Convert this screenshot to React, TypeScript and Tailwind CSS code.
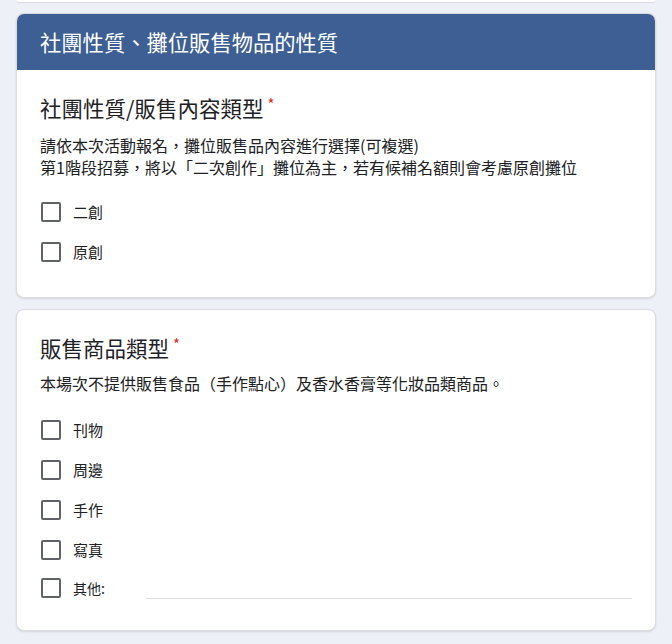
import React from "react";

const font = {
  fontFamily: '"Noto Sans CJK TC", Roboto, "Noto Sans", sans-serif',
};

function Box() {
  return (
    <span className="block w-[20px] h-[20px] shrink-0 rounded-[2px] border-2 border-[#5f6368] bg-white" />
  );
}

function Option({ label }: { label: string }) {
  return (
    <div className="flex items-center h-[40px]">
      <div className="ml-[1px]">
        <Box />
      </div>
      <span className="ml-[12px] text-[15px] leading-[20px] text-[#202124]">{label}</span>
    </div>
  );
}

function Title({ text }: { text: string }) {
  return (
    <div className="text-[21.5px] leading-[30px] text-[#202124]">
      {text}
      <span className="text-[#d93025] text-[15px] align-top relative top-[-4px] ml-[4px]">*</span>
    </div>
  );
}

export default function App() {
  return (
    <div className="min-h-[644px] w-[672px] bg-[#edf0f7] overflow-hidden" style={font}>
      <div className="mx-[16px] w-[640px] h-[3px] bg-white border-b border-[#dadce0] rounded-b-[8px]" />

      {/* Card 1 */}
      <div className="mx-[16px] mt-[10px] w-[640px] rounded-[8px] bg-white border border-[#dadce0] overflow-hidden shadow-[0_1px_2px_rgba(60,64,67,0.15)]">
        <div className="h-[56px] bg-[#3e5f94] flex items-center px-[23px]">
          <span className="text-white text-[21.3px] leading-[30px]">社團性質、攤位販售物品的性質</span>
        </div>
        <div className="px-[23px] pt-[23px] pb-[25px]">
          <Title text="社團性質/販售內容類型" />
          <div className="mt-[11px] text-[16px] leading-[22px] text-[#202124]">
            <div>請依本次活動報名，攤位販售品內容進行選擇(可複選)</div>
            <div>第1階段招募，將以「二次創作」攤位為主，若有候補名額則會考慮原創攤位</div>
          </div>
          <div className="mt-[14px]">
            <Option label="二創" />
            <Option label="原創" />
          </div>
        </div>
      </div>

      {/* Card 2 */}
      <div className="mx-[16px] mt-[11px] w-[640px] rounded-[8px] bg-white border border-[#dadce0] shadow-[0_1px_2px_rgba(60,64,67,0.15)]">
        <div className="px-[23px] pt-[23px] pb-[23px]">
          <Title text="販售商品類型" />
          <div className="mt-[9px] text-[16px] leading-[22px] text-[#202124]">
            本場次不提供販售食品（手作點心）及香水香膏等化妝品類商品。
          </div>
          <div className="mt-[16px]">
            <Option label="刊物" />
            <Option label="周邊" />
            <Option label="手作" />
            <Option label="寫真" />
            <div className="flex items-center h-[38px] -mt-[1px]">
              <div className="ml-[1px]">
                <Box />
              </div>
              <span className="ml-[12px] text-[14px] leading-[20px] text-[#202124]">其他:</span>
              <div className="ml-[41px] flex-1 self-end mb-[8px] h-[1px] bg-[#dadce0]" />
            </div>
          </div>
        </div>
      </div>
    </div>
  );
}
